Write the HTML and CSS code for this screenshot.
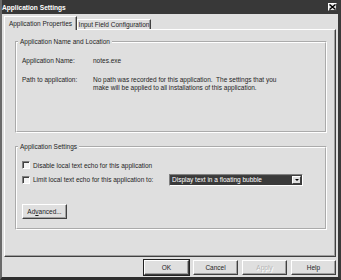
FILE: index.html
```html
<!DOCTYPE html>
<html lang="en">
<head>
    <meta charset="UTF-8">
    <title>Application Settings</title>
    <link rel="stylesheet" href="styles.css">
</head>
<body>

    <div class="window">
        <!-- Title bar -->
        <div class="titlebar">
            <span class="title">Application Settings</span>
            <span class="close">
                <svg width="7" height="6" viewBox="0 0 7 6">
                    <path d="M0.5 0.5 L6.5 5.5 M6.5 0.5 L0.5 5.5" stroke="#000" stroke-width="1.4" fill="none"/>
                </svg>
            </span>
        </div>

        <div class="content">
            <!-- Tabs -->
            <div class="tabs">
                <div class="tab active">Application Properties</div>
                <div class="tab">Input Field Configuration</div>
            </div>

            <div class="panel">
                <fieldset class="group group-name">
                    <legend>Application Name and Location</legend>
                    <div class="row first">
                        <span class="key">Application Name:</span>
                        <span class="val">notes.exe</span>
                    </div>
                    <div class="row">
                        <span class="key">Path to application:</span>
                        <span class="val">No path was recorded for this application.&nbsp; The settings that you<br>make will be applied to all installations of this application.</span>
                    </div>
                </fieldset>

                <fieldset class="group group-settings">
                    <legend>Application Settings</legend>
                    <div class="check first">
                        <span class="box"></span>
                        <span>Disable local text echo for this application</span>
                    </div>
                    <div class="check">
                        <span class="box"></span>
                        <span class="check-label">Limit local text echo for this application to:</span>
                        <div class="combo">
                            <span class="combo-value">Display text in a floating bubble</span>
                            <span class="combo-arrow"><span class="tri"></span></span>
                        </div>
                    </div>
                    <button class="btn advanced">Ad<u>v</u>anced...</button>
                </fieldset>
            </div>

            <!-- Dialog buttons -->
            <div class="actions">
                <button class="btn default">OK</button>
                <button class="btn">Cancel</button>
                <button class="btn disabled">Apply</button>
                <button class="btn">Help</button>
            </div>
        </div>
    </div>

</body>
</html>
```

FILE: styles.css
```css
body {
    margin: 0;
    font-family: 'Liberation Sans', Arial, sans-serif;
    font-size: 6.5px;
    color: #1e1e1e;
}

.window {
    width: 341px;
    height: 280px;
    box-sizing: border-box;
    background-color: #dfdfdf;
    border-left: 2px solid #6a6a6a;
    border-right: 3px solid #3a3a3a;
    border-bottom: 3px solid #2e2e2e;
    display: flex;
    flex-direction: column;
}

.titlebar {
    height: 14px;
    background-color: #383838;
    display: flex;
    align-items: center;
    justify-content: space-between;
    padding: 0 1px 0 0;
}

.title {
    color: #fff;
    font-weight: bold;
    font-size: 6.6px;
}

.close {
    width: 9px;
    height: 8px;
    box-sizing: border-box;
    background-color: #e4e4e4;
    border: 1px solid;
    border-color: #fff #404040 #404040 #fff;
    display: flex;
    align-items: center;
    justify-content: center;
}

.close svg {
    display: block;
}

.content {
    flex: 1;
    display: flex;
    flex-direction: column;
    padding: 2px 2px 0 2px;
}

.tabs {
    display: flex;
    align-items: flex-end;
    height: 14px;
    margin-bottom: -1px;
    position: relative;
    z-index: 1;
}

.tab {
    height: 10px;
    width: 74px;
    box-sizing: border-box;
    border-top: 1px solid #fff;
    border-left: 1px solid #fff;
    border-right: 1px solid #404040;
    box-shadow: inset -1px 0 0 #a0a0a0;
    display: flex;
    align-items: center;
    justify-content: center;
    margin-bottom: 1px;
}

.tab.active {
    height: 14px;
    width: 73px;
    margin-bottom: 0;
    background-color: #dfdfdf;
}

.panel {
    height: 228px;
    box-sizing: border-box;
    border: 1px solid;
    border-color: #fff #404040 #404040 #fff;
    box-shadow: inset -1px -1px 0 #a0a0a0;
    padding: 8px 8px 0 10px;
}

.group {
    margin: 0;
    padding: 0 6px 0 5px;
    border: 2px groove #fff;
    box-sizing: border-box;
}

.group legend {
    padding: 0 2px;
    margin-left: -4px;
    line-height: 8px;
}

.group-name {
    height: 95px;
}

.group-settings {
    height: 87px;
    margin-top: 10px;
}

.row {
    display: flex;
    line-height: 8px;
    margin-top: 11px;
}

.row.first {
    margin-top: 11px;
}

.key {
    width: 71px;
    flex: none;
}

.check {
    display: flex;
    align-items: center;
    height: 13px;
    margin-top: 4px;
}

.check.first {
    height: 8px;
    margin-top: 10px;
}

.box {
    width: 8px;
    height: 8px;
    box-sizing: border-box;
    flex: none;
    background-color: #f4f4f4;
    border: 1px solid;
    border-color: #808080 #fff #fff #808080;
    box-shadow: inset 1px 1px 0 #404040;
    margin-right: 3px;
}

.check-label {
    width: 136px;
    flex: none;
}

.combo {
    width: 134px;
    height: 12px;
    box-sizing: border-box;
    border: 1px solid;
    border-color: #808080 #fff #fff #808080;
    box-shadow: inset 1px 1px 0 #404040;
    padding: 1px 1px 1px 1px;
    display: flex;
    background-color: #3a3a3a;
}

.combo-value {
    flex: 1;
    color: #fff;
    line-height: 8px;
    padding-left: 1px;
}

.combo-arrow {
    width: 9px;
    flex: none;
    box-sizing: border-box;
    background-color: #dfdfdf;
    border: 1px solid;
    border-color: #fff #404040 #404040 #fff;
    display: flex;
    align-items: center;
    justify-content: center;
}

.tri {
    width: 0;
    height: 0;
    border-left: 2px solid transparent;
    border-right: 2px solid transparent;
    border-top: 2px solid #000;
}

.btn {
    font-family: inherit;
    font-size: 6.5px;
    color: #1e1e1e;
    background-color: #dfdfdf;
    border: 1px solid;
    border-color: #fff #404040 #404040 #fff;
    box-shadow: inset -1px -1px 0 #a0a0a0;
    padding: 0;
    width: 45px;
    height: 15px;
    box-sizing: border-box;
}

.btn.advanced {
    margin-top: 18px;
}

.btn.default {
    outline: 1px solid #222;
}

.btn.disabled {
    color: #b4b4b4;
    text-shadow: 1px 1px 0 #fff;
}

.actions {
    display: flex;
    justify-content: flex-end;
    gap: 4px;
    margin-top: 3px;
}
```
